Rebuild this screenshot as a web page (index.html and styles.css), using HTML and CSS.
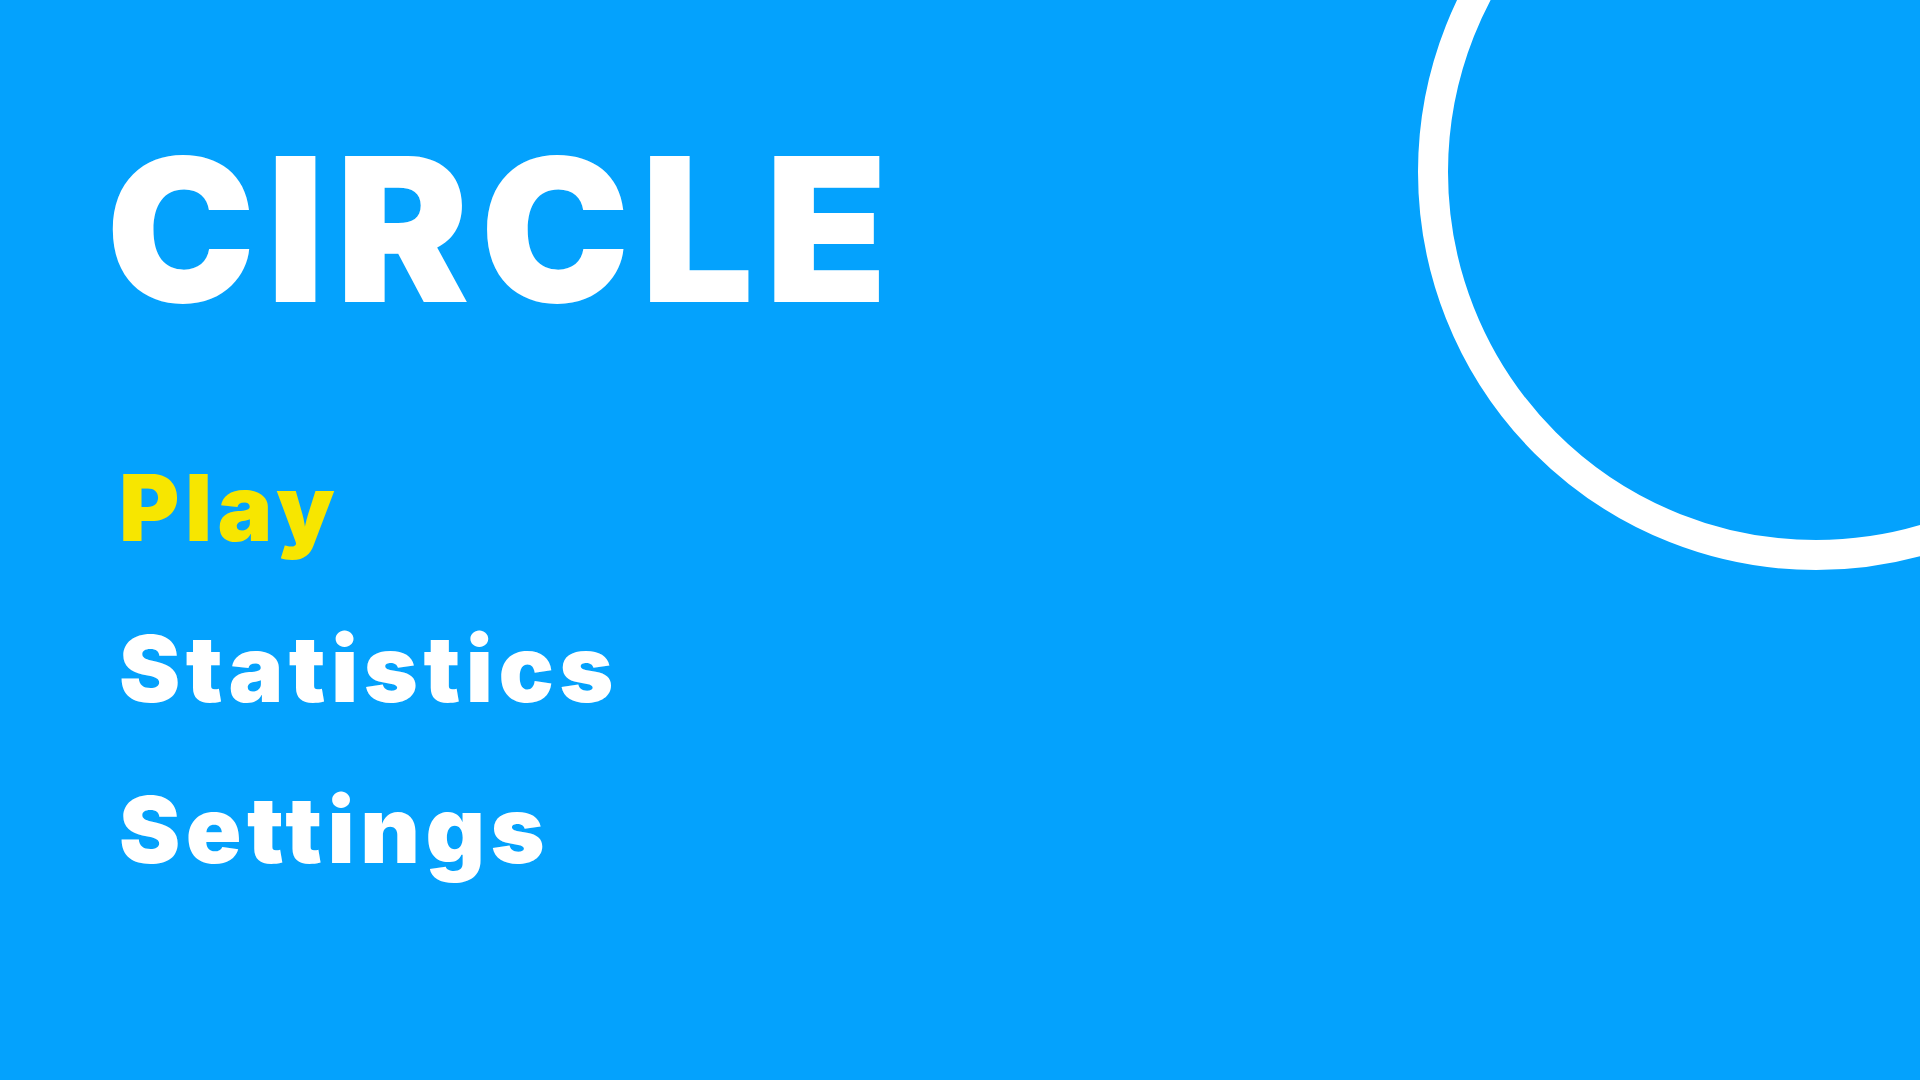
FILE: index.html
```html
<!DOCTYPE html>
<html lang="en">
<head>
<meta charset="utf-8">
<title>Circle</title>
<link rel="stylesheet" href="styles.css">
</head>
<body>
<main class="screen">
  <h1 class="title">CIRCLE</h1>
  <nav class="menu">
    <div class="item active">Play</div>
    <div class="item">Statistics</div>
    <div class="item">Settings</div>
  </nav>
  <div class="ring"></div>
</main>
</body>
</html>
```

FILE: styles.css
```css
html, body {
  margin: 0;
  padding: 0;
  background: #04a2fd;
}

.screen {
  position: relative;
  width: 1920px;
  height: 1080px;
  overflow: hidden;
  box-sizing: border-box;
  padding: 129px 0 0 119px;
  background: #04a2fd;
  font-family: "Inter", "Liberation Sans", Arial, sans-serif;
  font-weight: 900;
  color: #ffffff;
}

.title {
  margin: 0 0 98px -13px;
  font-size: 200px;
  line-height: 200px;
  font-weight: 900;
  letter-spacing: 11px;
}

.menu {
  display: flex;
  flex-direction: column;
}

.item {
  font-size: 92px;
  line-height: 161px;
  letter-spacing: 5.5px;
}

.item.active {
  color: #f7e600;
}

.ring {
  position: absolute;
  left: 1418px;
  top: -226px;
  width: 796px;
  height: 796px;
  box-sizing: border-box;
  border: 30px solid #ffffff;
  border-radius: 50%;
}
```
